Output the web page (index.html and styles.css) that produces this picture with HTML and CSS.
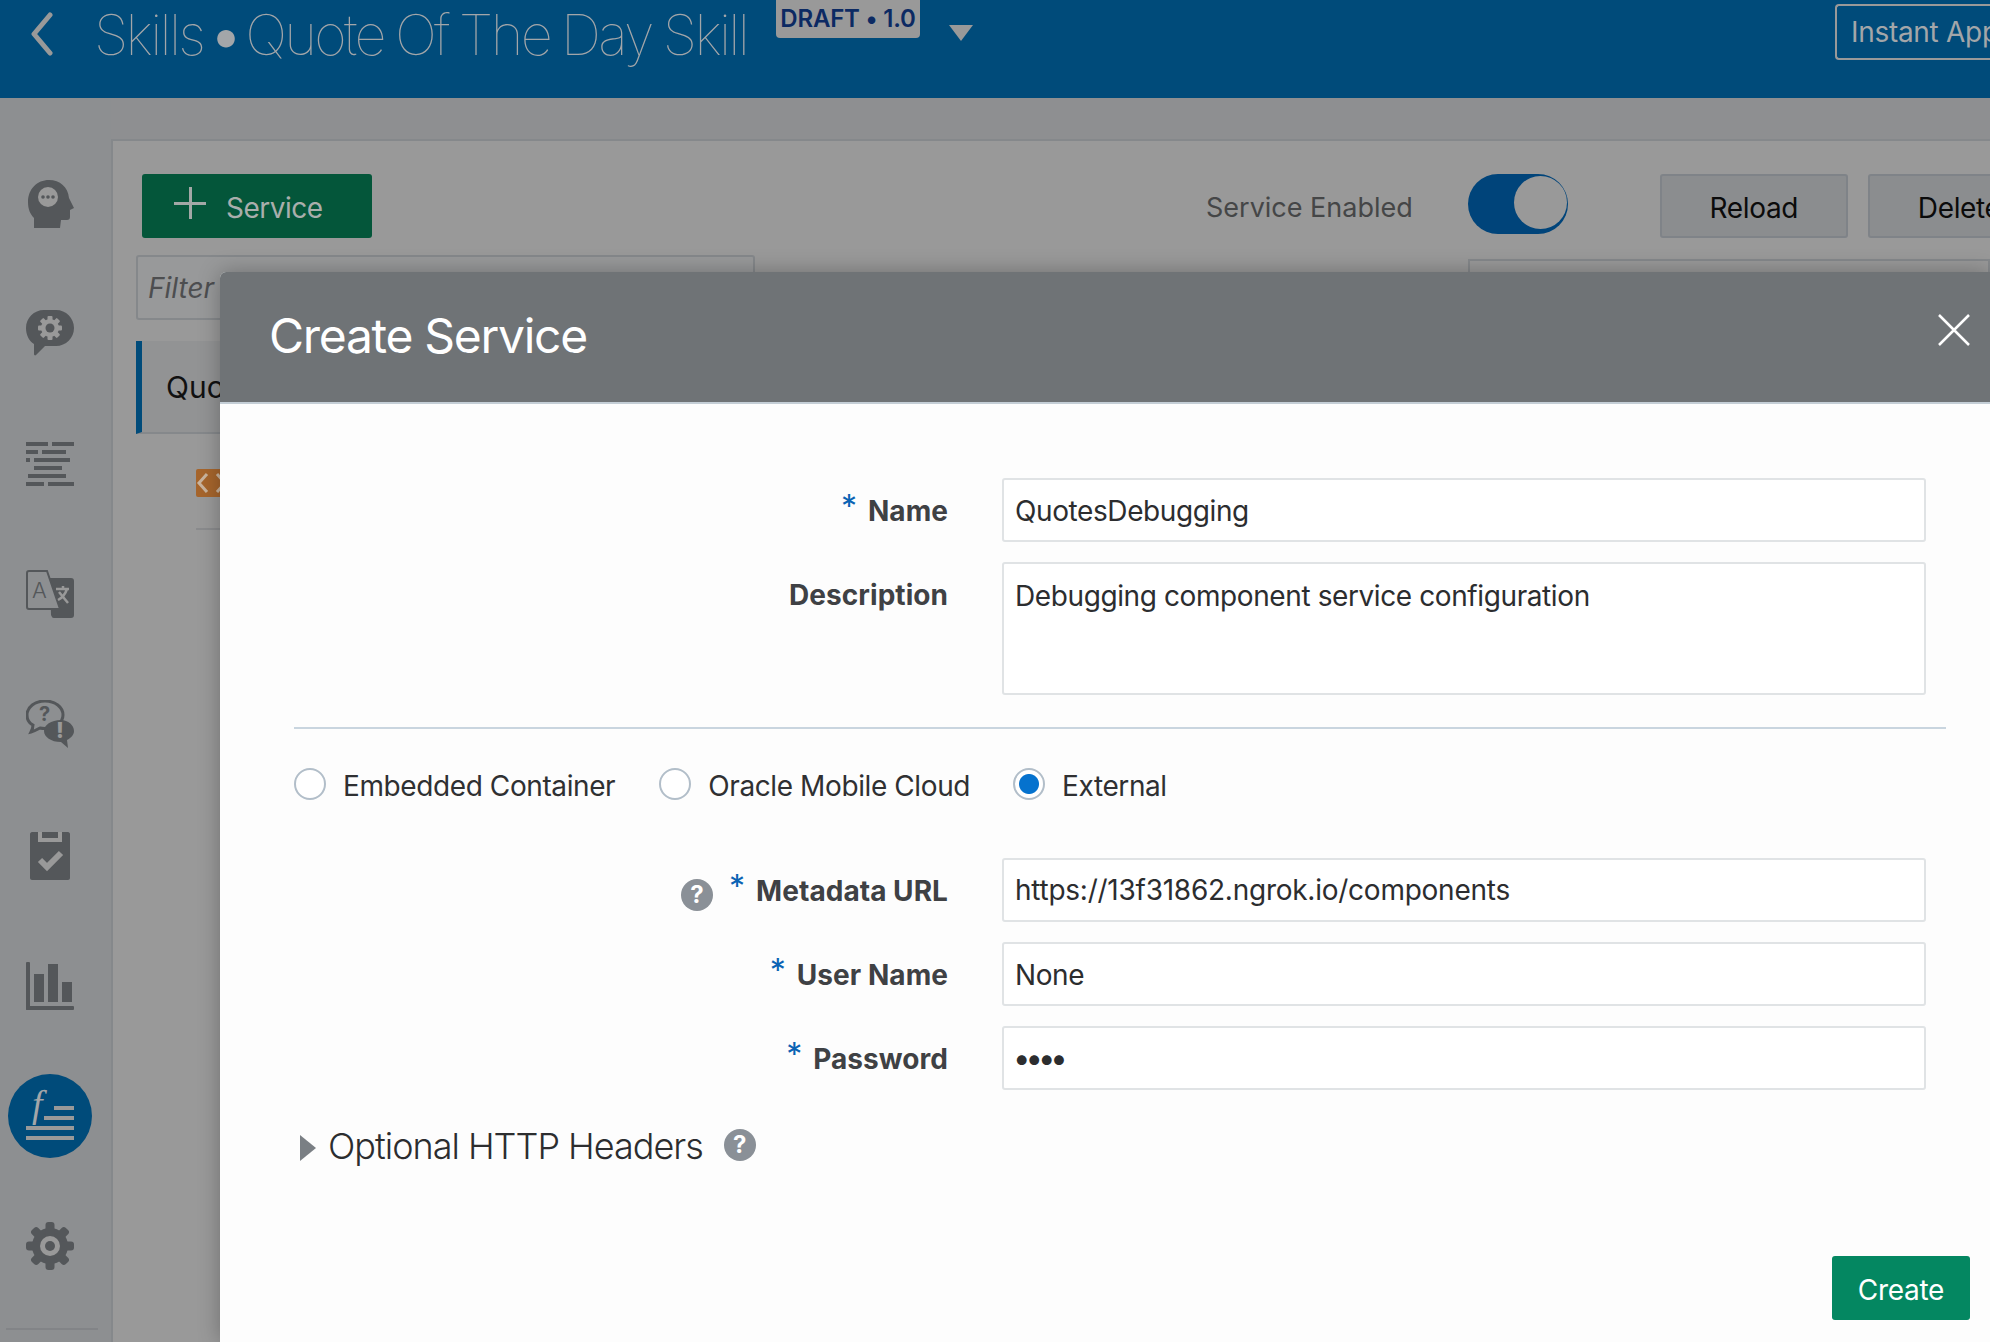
FILE: index.html
```html
<!DOCTYPE html>
<html lang="en">
<head>
<meta charset="utf-8">
<title>Create Service</title>
<link rel="stylesheet" href="styles.css">
</head>
<body>
<div class="app">
  <header class="topbar">
    <svg class="back" viewBox="0 0 24 44"><path d="M20 3 4 22l16 19"/></svg>
    <h1 class="skill-title"><span class="lead">Skills </span><span class="bullet">• </span>Quote Of The Day Skill</h1>
    <span class="draft">DRAFT • 1.0</span>
    <span class="caret"></span>
    <span class="instant">Instant App</span>
  </header>
  <div class="workspace">
    <nav class="rail">
      <svg class="rail-icon" viewBox="0 0 48 52"><path class="d" d="M8 48V38C4 34 2 29 2 22 2 9 11 0 23 0c11 0 19 7 20 18l5 10-4 2v7c0 2-1 3-3 3h-6l-1 8z"/><circle class="l" cx="22" cy="17" r="10"/><circle class="d" cx="17" cy="17" r="1.8"/><circle class="d" cx="22" cy="17" r="1.8"/><circle class="d" cx="27" cy="17" r="1.8"/></svg>
      <svg class="rail-icon" viewBox="0 0 48 52"><path class="d" d="M18 0h12c10 0 18 8 18 18s-8 18-18 18H19l-9 9c-1 1-2 0-2-1v-10C3 31 0 25 0 18 0 8 8 0 18 0z"/><g transform="translate(24 18)"><circle class="l" r="9"/><rect class="l" x="-2.5" y="-12" width="5" height="24" rx="1"/><rect class="l" x="-2.5" y="-12" width="5" height="24" rx="1" transform="rotate(45)"/><rect class="l" x="-2.5" y="-12" width="5" height="24" rx="1" transform="rotate(90)"/><rect class="l" x="-2.5" y="-12" width="5" height="24" rx="1" transform="rotate(135)"/><circle class="d" r="4.5"/></g></svg>
      <svg class="rail-icon" viewBox="0 0 48 52"><g class="d"><rect y="2" width="22" height="4"/><rect x="26" y="2" width="22" height="4"/><rect y="10" width="12" height="4"/><rect x="16" y="10" width="24" height="4"/><rect y="18" width="4" height="4"/><rect x="8" y="18" width="36" height="4"/><rect x="8" y="26" width="28" height="4"/><rect x="2" y="34" width="38" height="4"/><rect y="42" width="18" height="4"/><rect x="22" y="42" width="26" height="4"/></g></svg>
      <svg class="rail-icon" viewBox="0 0 48 52"><path class="d" d="M24 8h21c2 0 3 1 3 3v34c0 2-1 3-3 3H28c-2 0-2-1-3-3z"/><path class="ol" d="M3 1h18l13 38H3c-1 0-2-1-2-2V3c0-1 1-2 2-2z"/><text class="glyph-a" x="6" y="28">A</text><path class="xl" d="M30 19h13M37 16v3M41 19c-2 6-5 9-9 11M33 22l9 11"/></svg>
      <svg class="rail-icon" viewBox="0 0 48 52"><path class="ol2" d="M19 1C9 1 1 7 1 15c0 5 2 8 6 10 0 2-1 5-2 7 4-1 7-3 9-4 2 .5 3 .5 5 .5 10 0 18-6 18-13.500C37 7 29 1 19 1z"/><path class="d" d="M35 20c-10 0-17 5-17 11s7 11 17 11l7 6-1-8c4-2 7-5 7-9 0-6-6-11-13-11z"/><text class="glyph-q" x="13" y="21">?</text><text class="glyph-e" x="30" y="38">!</text></svg>
      <svg class="rail-icon" viewBox="0 0 48 52"><path class="d" d="M6 2h36c1 0 2 1 2 2v44c0 1-1 2-2 2H6c-1 0-2-1-2-2V4c0-1 1-2 2-2z"/><path class="l" d="M12 2h24v10H12z"/><rect class="d" x="16" y="2" width="16" height="6"/><path class="check" d="M14 30l7 7 14-14"/></svg>
      <svg class="rail-icon" viewBox="0 0 48 52"><g class="d"><rect y="2" width="4" height="48" rx="1"/><rect y="46" width="48" height="4" rx="1"/><rect x="8" y="14" width="10" height="28"/><rect x="22" y="4" width="10" height="38"/><rect x="36" y="22" width="10" height="20"/></g></svg>
      <div class="rail-active">
        <span class="fx">f</span>
        <svg class="fx-lines" viewBox="0 0 48 34"><g class="l"><rect x="28" y="0" width="20" height="4"/><rect x="18" y="10" width="30" height="4"/><rect y="20" width="48" height="4"/><rect y="30" width="48" height="4"/></g></svg>
      </div>
      <svg class="rail-icon" viewBox="0 0 48 52"><g transform="translate(24 26)"><g class="d"><circle r="18"/><rect x="-4.500" y="-24" width="9" height="48" rx="3"/><rect x="-4.500" y="-24" width="9" height="48" rx="3" transform="rotate(45)"/><rect x="-4.500" y="-24" width="9" height="48" rx="3" transform="rotate(90)"/><rect x="-4.500" y="-24" width="9" height="48" rx="3" transform="rotate(135)"/></g><circle class="l" r="10"/><circle class="d" r="5"/></g></svg>
      <div class="rail-rule"></div>
    </nav>
    <main class="panel">
      <div class="toolbar">
        <button class="btn-add"><span class="plus"></span><span class="add-text">Service</span></button>
        <span class="enabled-label">Service Enabled</span>
        <span class="toggle"><span class="thumb"></span></span>
        <button class="btn-plain">Reload</button>
        <button class="btn-plain">Delete</button>
      </div>
      <div class="columns">
        <div class="list">
          <div class="filter">Filter</div>
          <div class="list-item">Quotes</div>
          <div class="sub-item"><span class="code-badge"><svg viewBox="0 0 32 28"><path d="M11 5 3 14l8 9M21 5l8 9-8 9"/></svg></span></div>
        </div>
        <div class="detail"></div>
      </div>
    </main>
  </div>
</div>

<section class="dialog">
  <div class="dialog-head">
    <h2>Create Service</h2>
    <svg class="close" viewBox="0 0 32 32"><path d="M1 1l30 30M31 1 1 31"/></svg>
  </div>
  <div class="dialog-body">
    <div class="field">
      <div class="label"><span class="req">*</span><span>Name</span></div>
      <div class="input">QuotesDebugging</div>
    </div>
    <div class="field">
      <div class="label"><span>Description</span></div>
      <div class="input area">Debugging component service configuration</div>
    </div>
    <div class="divider"></div>
    <div class="radios">
      <label class="radio"><span class="dot"></span>Embedded Container</label>
      <label class="radio"><span class="dot"></span>Oracle Mobile Cloud</label>
      <label class="radio"><span class="dot on"></span>External</label>
    </div>
    <div class="field">
      <div class="label"><span class="help help-label">?</span><span class="req">*</span><span>Metadata URL</span></div>
      <div class="input url">https://13f31862.ngrok.io/components</div>
    </div>
    <div class="field">
      <div class="label"><span class="req">*</span><span>User Name</span></div>
      <div class="input">None</div>
    </div>
    <div class="field">
      <div class="label"><span class="req">*</span><span>Password</span></div>
      <div class="input dots">••••</div>
    </div>
    <div class="optional"><span class="tri"></span><span class="opt-text">Optional HTTP Headers</span><span class="help">?</span></div>
    <div class="actions"><button class="btn-create">Create</button></div>
  </div>
</section>
</body>
</html>
```

FILE: styles.css
```css
* { box-sizing: border-box; }
html, body { margin: 0; height: 100%; overflow: hidden; }
body { font-family: Inter, "Liberation Sans", sans-serif; background: #8e8f91; position: relative; }
button { font-family: inherit; cursor: pointer; }

.app { width: 1990px; height: 1342px; display: flex; flex-direction: column; overflow: hidden; }

.topbar { flex: 0 0 98px; background: #004b7a; display: flex; align-items: flex-start; overflow: hidden; white-space: nowrap; color: #999; }
.back { width: 24px; height: 44px; margin: 12px 0 0 30px; flex: none; }
.back path { fill: none; stroke: #999; stroke-width: 5; stroke-linecap: round; stroke-linejoin: round; }
.skill-title { margin: 0 0 0 40px; width: 662px; flex: none; font-size: 56px; line-height: 70px; font-weight: 100; letter-spacing: -2.7px; word-spacing: -2px; color: #a3a6a9; }
.lead { word-spacing: -6px; }
.bullet { font-weight: 400; word-spacing: -7px; }
.draft { margin-left: 20px; height: 38px; width: 144px; background: #999; border-radius: 0 0 4px 4px; color: #0c2a63; font-size: 24px; font-weight: 600; letter-spacing: -.2px; line-height: 38px; text-align: center; flex: none; }
.caret { margin: 25px 0 0 29px; border-left: 12px solid transparent; border-right: 12px solid transparent; border-top: 16px solid #999; flex: none; }
.instant { margin: 4px 0 0 auto; flex: 0 0 155px; height: 56px; border: 2px solid #999; border-right: 0; border-radius: 4px 0 0 4px; font-size: 28px; letter-spacing: -.3px; line-height: 52px; padding-left: 14px; color: #a3a6a9; overflow: hidden; }

.workspace { flex: 1; display: flex; min-height: 0; }
.rail { flex: 0 0 111px; padding: 82px 0 0 26px; display: flex; flex-direction: column; gap: 78px; position: relative; background: #8d8f91; }
.rail-icon { width: 48px; height: 52px; display: block; flex: none; }
.d { fill: #54575a; }
.l { fill: #999; }
.ol { fill: #8d8f91; stroke: #54575a; stroke-width: 2; }
.ol2 { fill: #8d8f91; stroke: #54575a; stroke-width: 3; }
.xl { fill: none; stroke: #999; stroke-width: 2.500; }
.check { fill: none; stroke: #999; stroke-width: 6; }
.glyph-a { font-family: Inter, sans-serif; font-size: 22px; font-weight: 300; fill: #54575a; }
.glyph-q { font-family: Inter, sans-serif; font-size: 20px; font-weight: 700; fill: #54575a; }
.glyph-e { font-family: Inter, sans-serif; font-size: 22px; font-weight: 800; fill: #999; }

.rail-active { width: 84px; height: 84px; margin: -16px 0 -16px -18px; border-radius: 50%; background: #004b7a; position: relative; flex: none; }
.fx { position: absolute; left: 24px; top: 5px; font-family: "Liberation Serif", serif; font-style: italic; font-size: 38px; line-height: 50px; color: #a3a6a9; }
.fx-lines { position: absolute; left: 18px; top: 32px; width: 48px; height: 34px; }
.rail-rule { position: absolute; left: 6px; bottom: 12px; width: 92px; height: 2px; background: #828487; }

.panel { flex: 1; margin-top: 41px; background: #999; border-top: 2px solid #85888b; border-left: 2px solid #85888b; padding: 33px 0 0 23px; display: flex; flex-direction: column; min-width: 0; overflow: hidden; }
.toolbar { display: flex; align-items: flex-start; height: 64px; white-space: nowrap; }
.btn-add { width: 230px; height: 64px; margin-left: 6px; background: #04563a; border: 0; border-radius: 3px; color: #a9aeac; display: flex; align-items: center; font-size: 28px; letter-spacing: -.5px; padding: 0; flex: none; }
.add-text { margin: 3px 0 0 -4px; }
.plus { width: 32px; height: 32px; margin: -6px 24px 0 32px; position: relative; background: linear-gradient(#a3a8a6, #a3a8a6) center/32px 3px no-repeat, linear-gradient(#a3a8a6, #a3a8a6) center/3px 32px no-repeat; flex: none; }
.enabled-label { margin-left: 834px; font-size: 27px; line-height: 67px; color: #454647; flex: none; }
.toggle { margin-left: 55px; width: 100px; height: 60px; border-radius: 30px; background: #00447a; position: relative; flex: none; }
.thumb { position: absolute; right: 1px; top: 2px; width: 53px; height: 53px; border-radius: 50%; background: #999; }
.btn-plain { height: 64px; width: 188px; margin-left: 92px; background: #8b8d8f; border: 2px solid #7f8388; border-radius: 3px; font-size: 28px; letter-spacing: -.35px; color: #0b0b0b; flex: none; padding: 3px 0 0; }
.btn-plain + .btn-plain { margin-left: 20px; text-align: left; padding-left: 48px; }

.columns { display: flex; margin-top: 17px; flex: 1; }
.list { width: 619px; flex: none; }
.filter { height: 65px; border: 2px solid #85888b; border-radius: 3px; background: #98999a; font-style: italic; font-size: 28px; line-height: 63px; padding-left: 10px; color: #4d4e50; }
.list-item { margin-top: 21px; height: 93px; border-left: 6px solid #004b7a; border-bottom: 2px solid #85888b; background: #929394; padding-left: 24px; font-size: 30px; line-height: 93px; color: #111; }
.sub-item { margin: 0 0 0 60px; padding-top: 35px; height: 96px; border-bottom: 2px solid #8a8b8d; }
.code-badge { display: block; width: 60px; height: 28px; background: #a6652c; border-radius: 2px; }
.code-badge svg { width: 32px; height: 28px; display: block; }
.code-badge path { fill: none; stroke: #c9b49e; stroke-width: 3; }
.detail { margin: 4px 0 0 713px; flex: 1; height: 200px; border: 2px solid #85888b; border-bottom: 0; }

.dialog { position: absolute; left: 220px; top: 272px; right: 0; bottom: 0; background: #fdfdfd; border-radius: 6px 0 0 0; box-shadow: 0 0 22px rgba(0,0,0,.28); }
.dialog-head { height: 132px; background: #6f7376; border-bottom: 2px solid #c4ced6; border-radius: 6px 0 0 0; position: relative; }
.dialog-head h2 { margin: 0 0 0 49px; font-size: 48px; line-height: 128px; font-weight: 400; color: #fff; letter-spacing: -1.3px; }
.close { position: absolute; left: 1718px; top: 42px; width: 32px; height: 32px; }
.close path { fill: none; stroke: #fff; stroke-width: 2.500; }

.dialog-body { padding: 74px 0 0 74px; }
.field { display: flex; margin-bottom: 20px; align-items: flex-start; height: 64px; }
.field:nth-child(2) { height: 133px; }
.label { width: 654px; flex: none; display: flex; justify-content: flex-end; align-items: flex-start; font-size: 28px; font-weight: 700; letter-spacing: .05px; line-height: 67px; color: #3f4144; white-space: nowrap; }
.req { color: #0a63b4; font-weight: 400; font-size: 32px; line-height: 58px; margin-right: 11px; }
.input { margin-left: 54px; flex: 0 0 924px; height: 64px; background: #fff; border: 2px solid #e0e3e5; border-radius: 3px; font-size: 28px; letter-spacing: -.4px; line-height: 62px; padding-left: 11px; color: #2c2d2f; white-space: nowrap; }
.input.area { height: 133px; line-height: 64px; }
.input.url { letter-spacing: -.25px; line-height: 61px; }
.input.dots { letter-spacing: -5px; font-size: 31px; line-height: 60px; padding-left: 9px; }
.divider { height: 2px; background: #c9d5df; margin-top: 32px; width: 1652px; }
.radios { display: flex; margin-top: 30px; height: 52px; align-items: center; font-size: 28px; line-height: 34px; letter-spacing: -.4px; color: #2f3032; }
.radio { display: flex; align-items: center; white-space: nowrap; padding-top: 2px; }
.radio + .radio { margin-left: 44px; }
.radio:last-child { margin-left: 43px; }
.dot { width: 32px; height: 32px; border: 2px solid #b2bec9; border-radius: 50%; background: #fff; margin-right: 17px; flex: none; margin-top: -4px; }
.dot.on { background: radial-gradient(circle, #0572ce 0 9.500px, #fff 10.500px); }
.radios + .field { margin-top: 47px; }
.help { display: inline-block; width: 32px; height: 32px; border-radius: 50%; background: #8a9097; color: #fff; font-size: 24px; font-weight: 700; letter-spacing: 0; line-height: 32px; text-align: center; flex: none; }
.help-label { margin: 21px 16px 0 0; }
.optional { display: flex; align-items: center; margin-top: 26px; height: 60px; }
.tri { margin-left: 6px; border-left: 16px solid #7a7f84; border-top: 13px solid transparent; border-bottom: 13px solid transparent; flex: none; margin-top: 4px; }
.opt-text { margin-left: 12px; font-size: 36px; font-weight: 300; letter-spacing: -1px; color: #2c2d2f; white-space: nowrap; }
.opt-text + .help { margin-left: 21px; margin-top: -2px; }
.actions { width: 1676px; margin-top: 80px; display: flex; justify-content: flex-end; }
.btn-create { width: 138px; height: 64px; background: #048761; color: #fff; border: 0; border-radius: 3px; font-size: 28px; letter-spacing: -.3px; padding: 4px 0 0; }
```
